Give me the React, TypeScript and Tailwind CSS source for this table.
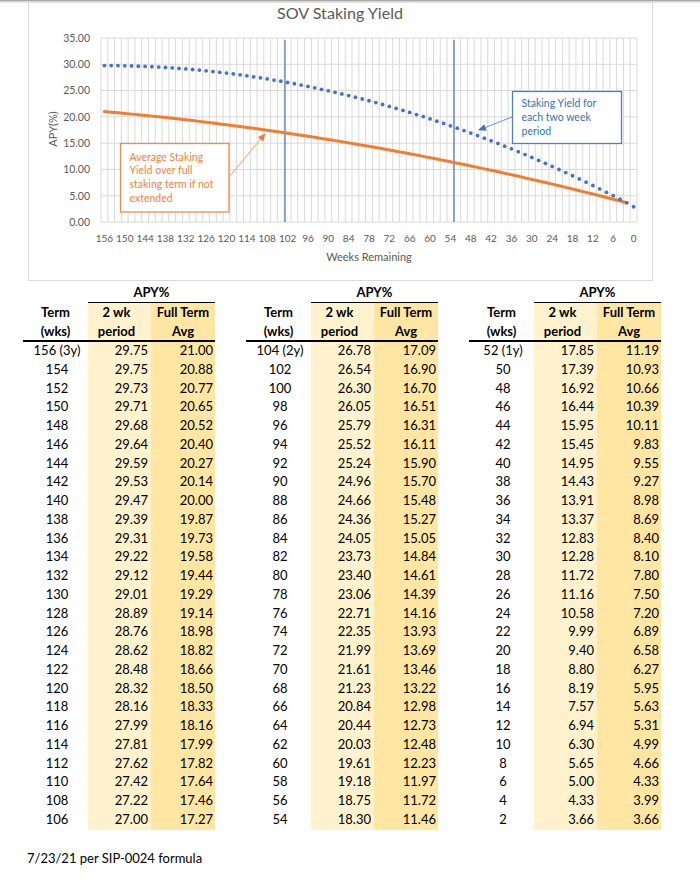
import React from "react";

type Row = [string, string, string];

const col1: Row[] = [
  ["156 (3y)", "29.75", "21.00"], ["154", "29.75", "20.88"], ["152", "29.73", "20.77"], ["150", "29.71", "20.65"],
  ["148", "29.68", "20.52"], ["146", "29.64", "20.40"], ["144", "29.59", "20.27"], ["142", "29.53", "20.14"],
  ["140", "29.47", "20.00"], ["138", "29.39", "19.87"], ["136", "29.31", "19.73"], ["134", "29.22", "19.58"],
  ["132", "29.12", "19.44"], ["130", "29.01", "19.29"], ["128", "28.89", "19.14"], ["126", "28.76", "18.98"],
  ["124", "28.62", "18.82"], ["122", "28.48", "18.66"], ["120", "28.32", "18.50"], ["118", "28.16", "18.33"],
  ["116", "27.99", "18.16"], ["114", "27.81", "17.99"], ["112", "27.62", "17.82"], ["110", "27.42", "17.64"],
  ["108", "27.22", "17.46"], ["106", "27.00", "17.27"],
];
const col2: Row[] = [
  ["104 (2y)", "26.78", "17.09"], ["102", "26.54", "16.90"], ["100", "26.30", "16.70"], ["98", "26.05", "16.51"],
  ["96", "25.79", "16.31"], ["94", "25.52", "16.11"], ["92", "25.24", "15.90"], ["90", "24.96", "15.70"],
  ["88", "24.66", "15.48"], ["86", "24.36", "15.27"], ["84", "24.05", "15.05"], ["82", "23.73", "14.84"],
  ["80", "23.40", "14.61"], ["78", "23.06", "14.39"], ["76", "22.71", "14.16"], ["74", "22.35", "13.93"],
  ["72", "21.99", "13.69"], ["70", "21.61", "13.46"], ["68", "21.23", "13.22"], ["66", "20.84", "12.98"],
  ["64", "20.44", "12.73"], ["62", "20.03", "12.48"], ["60", "19.61", "12.23"], ["58", "19.18", "11.97"],
  ["56", "18.75", "11.72"], ["54", "18.30", "11.46"],
];
const col3: Row[] = [
  ["52 (1y)", "17.85", "11.19"], ["50", "17.39", "10.93"], ["48", "16.92", "10.66"], ["46", "16.44", "10.39"],
  ["44", "15.95", "10.11"], ["42", "15.45", "9.83"], ["40", "14.95", "9.55"], ["38", "14.43", "9.27"],
  ["36", "13.91", "8.98"], ["34", "13.37", "8.69"], ["32", "12.83", "8.40"], ["30", "12.28", "8.10"],
  ["28", "11.72", "7.80"], ["26", "11.16", "7.50"], ["24", "10.58", "7.20"], ["22", "9.99", "6.89"],
  ["20", "9.40", "6.58"], ["18", "8.80", "6.27"], ["16", "8.19", "5.95"], ["14", "7.57", "5.63"],
  ["12", "6.94", "5.31"], ["10", "6.30", "4.99"], ["8", "5.65", "4.66"], ["6", "5.00", "4.33"],
  ["4", "4.33", "3.99"], ["2", "3.66", "3.66"],
];

const all = [...col1, ...col2, ...col3];

const X0 = 101;
const X1 = 637;
const W = (X1 - X0) / 79;
const Y0 = 222;
const K = 184 / 35;
const cx = (i: number) => X0 + W * (i + 0.5);
const cy = (v: number) => Y0 - v * K;

const FONT = "Lato, 'Open Sans', sans-serif";

function Chart() {
  const dots = all.map((r, i) => ({ x: cx(i), y: cy(parseFloat(r[1])) }));
  dots.push({ x: cx(78), y: cy(2.9) });
  const line = all.map((r, i) => `${cx(i).toFixed(2)},${cy(parseFloat(r[2])).toFixed(2)}`).join(" ");
  const xLabels: number[] = [];
  for (let i = 0; i <= 78; i += 3) xLabels.push(i);
  const vgrid: number[] = [];
  for (let k = 0; k <= 79; k++) vgrid.push(X0 + W * k);
  const hvals = [0, 5, 10, 15, 20, 25, 30, 35];

  return (
    <svg width="700" height="282" viewBox="0 0 700 282" className="block" style={{ fontFamily: FONT }}>
      <defs>
        <marker id="arrO" markerUnits="userSpaceOnUse" markerWidth="8" markerHeight="8" refX="7" refY="4" orient="auto">
          <path d="M0,0.5 L8,4 L0,7.5 z" fill="#ED7D31" />
        </marker>
        <marker id="arrB" markerUnits="userSpaceOnUse" markerWidth="8" markerHeight="8" refX="7" refY="4" orient="auto">
          <path d="M0,0.5 L8,4 L0,7.5 z" fill="#4472C4" />
        </marker>
      </defs>
      <rect x="0" y="0" width="700" height="1" fill="#a8a8a8" />
      <rect x="0" y="1" width="700" height="1.5" fill="#d4d4d4" />
      <rect x="28.5" y="2" width="624" height="278.5" fill="none" stroke="#d9d9d9" strokeWidth="1" />

      {vgrid.map((x, k) => (
        <line key={"v" + k} x1={x} x2={x} y1={38} y2={Y0} stroke="#d9d9d9" strokeWidth="1" />
      ))}
      {hvals.map((v) => (
        <line key={"h" + v} x1={X0} x2={X1} y1={cy(v)} y2={cy(v)} stroke="#d9d9d9" strokeWidth="1" />
      ))}

      {hvals.map((v) => (
        <text key={"yl" + v} x={90} y={cy(v) + 3.8} textAnchor="end" fontSize="10.5" fill="#595959">
          {v.toFixed(2)}
        </text>
      ))}
      {xLabels.map((i) => (
        <text key={"xl" + i} x={cx(i)} y={241.5} textAnchor="middle" fontSize="10" fill="#595959">
          {156 - i * 2}
        </text>
      ))}
      <text x={369} y={261} textAnchor="middle" fontSize="11" fill="#595959">
        Weeks Remaining
      </text>
      <text x={0} y={0} transform="translate(56.5 129) rotate(-90)" textAnchor="middle" fontSize="11" fill="#595959">
        APY(%)
      </text>
      <text x={340} y={18.5} textAnchor="middle" fontSize="15.5" fill="#595959" textLength="126" lengthAdjust="spacingAndGlyphs">
        SOV Staking Yield
      </text>

      <line x1={285} x2={285} y1={40} y2={Y0} stroke="#4472C4" strokeWidth="1.2" />
      <line x1={454} x2={454} y1={40} y2={Y0} stroke="#4472C4" strokeWidth="1.2" />

      <polyline points={line} fill="none" stroke="#F47C30" strokeWidth="3" strokeLinejoin="round" strokeLinecap="round" />
      {dots.map((d, i) => (
        <circle key={"d" + i} cx={d.x} cy={d.y} r="1.9" fill="#4472C4" />
      ))}

      <line x1={229} y1={177} x2={265} y2={134} stroke="#F4884A" strokeWidth="0.8" markerEnd="url(#arrO)" />
      <rect x={120.5} y={143.5} width={108.5} height={68.5} fill="#ffffff" stroke="#F08A4B" strokeWidth="1.3" />
      <g fontSize="10.5" fill="#F4803E">
        <text x={129.5} y={160.5}>Average Staking</text>
        <text x={129.5} y={174.3}>Yield over full</text>
        <text x={129.5} y={188}>staking term if not</text>
        <text x={129.5} y={201.8}>extended</text>
      </g>

      <line x1={512} y1={117} x2={479} y2={130} stroke="#4472C4" strokeWidth="0.8" markerEnd="url(#arrB)" />
      <rect x={512.5} y={91.5} width={109} height={52} fill="#ffffff" stroke="#4F7FC8" strokeWidth="1.3" />
      <g fontSize="10.5" fill="#2E75B6">
        <text x={521.5} y={107}>Staking Yield for</text>
        <text x={521.5} y={121}>each two week</text>
        <text x={521.5} y={135}>period</text>
      </g>
    </svg>
  );
}

function Block({ rows }: { rows: Row[] }) {
  return (
    <div className="w-[192px] grid grid-cols-[65px_63px_64px] text-[13px] text-black">
      <div className="h-[19px]" />
      <div className="col-span-2 h-[19px] border-b border-black text-center font-bold leading-[19px] box-content">APY%</div>
      <div className="h-[19px] text-center font-bold leading-[19px]">Term</div>
      <div className="h-[19px] bg-[#FFF2CC] text-center font-bold leading-[19px] pr-[6px]">2 wk</div>
      <div className="h-[19px] bg-[#FFE6A3] text-center font-bold leading-[19px]">Full Term</div>
      <div className="h-[20px] border-b-2 border-black text-center font-bold leading-[18px]">(wks)</div>
      <div className="h-[20px] border-b-2 border-black bg-[#FFF2CC] text-center font-bold leading-[18px] pr-[6px]">period</div>
      <div className="h-[20px] border-b-2 border-black bg-[#FFE6A3] text-center font-bold leading-[18px]">Avg</div>
      {rows.map((r) => (
        <React.Fragment key={r[0]}>
          <div className="h-[18.76px] leading-[17px] text-center pl-[3px]">{r[0]}</div>
          <div className="h-[18.76px] leading-[17px] text-right pr-[3px] bg-[#FFF2CC]">{r[1]}</div>
          <div className="h-[18.76px] leading-[17px] text-right pr-[2px] bg-[#FFE6A3]">{r[2]}</div>
        </React.Fragment>
      ))}
    </div>
  );
}

export default function App() {
  return (
    <div className="w-[700px] h-[880px] bg-white overflow-hidden" style={{ fontFamily: FONT }}>
      <Chart />
      <div className="flex pl-[23px] gap-[31px] mt-[1px]">
        <Block rows={col1} />
        <Block rows={col2} />
        <Block rows={col3} />
      </div>
      <div className="pl-[27px] mt-[19px] text-[13px] leading-[18px] text-black">7/23/21 per SIP-0024 formula</div>
    </div>
  );
}
